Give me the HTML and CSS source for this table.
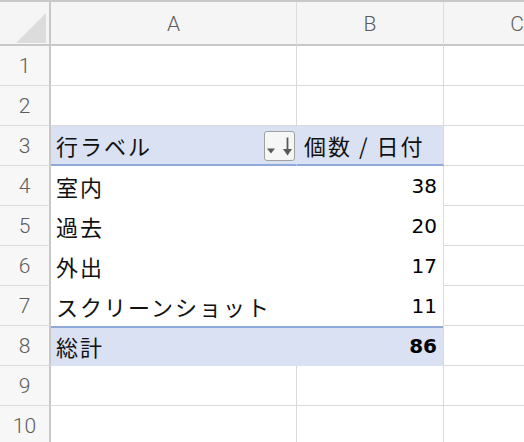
FILE: index.html
```html
<!DOCTYPE html>
<html lang="ja">
<head>
<meta charset="utf-8">
<link rel="stylesheet" href="styles.css">
</head>
<body>
<div class="viewport">
<div class="sheet">
  <div class="corner"><svg width="30" height="30" viewBox="0 0 30 30"><polygon points="30,0 30,30 0,30" fill="#dcdcdc"/></svg></div>
  <div class="hd">A</div>
  <div class="hd">B</div>
  <div class="hd">C</div>

  <div class="rh">1</div><div class="c"></div><div class="c"></div><div class="c"></div>
  <div class="rh">2</div><div class="c"></div><div class="c"></div><div class="c"></div>

  <div class="rh">3</div>
  <div class="c pv pvh pa"><span class="txt">行ラベル</span>
    <span class="filter"><svg width="31" height="30" viewBox="0 0 31 30"><polygon points="3,17.5 11,17.5 7,22.5" fill="#5a5a5a"/><line x1="23.5" y1="6.5" x2="23.5" y2="20" stroke="#5a5a5a" stroke-width="1.8"/><polygon points="19,18 28,18 23.5,24.5" fill="#5a5a5a"/></svg></span>
  </div>
  <div class="c pv pvh pb"><span class="txt">個数 / 日付</span></div>
  <div class="c"></div>

  <div class="rh">4</div><div class="c pv pa"><span class="txt">室内</span></div><div class="c pv pb num">38</div><div class="c"></div>
  <div class="rh">5</div><div class="c pv pa"><span class="txt">過去</span></div><div class="c pv pb num">20</div><div class="c"></div>
  <div class="rh">6</div><div class="c pv pa"><span class="txt">外出</span></div><div class="c pv pb num">17</div><div class="c"></div>
  <div class="rh">7</div><div class="c pv pa"><span class="txt">スクリーンショット</span></div><div class="c pv pb num">11</div><div class="c"></div>

  <div class="rh">8</div><div class="c pv tot pa"><span class="txt">総計</span></div><div class="c pv tot pb num bold">86</div><div class="c"></div>

  <div class="rh">9</div><div class="c"></div><div class="c"></div><div class="c"></div>
  <div class="rh">10</div><div class="c"></div><div class="c"></div><div class="c"></div>
</div>
</div>
</body>
</html>
```
FILE: styles.css
```css
html, body {
  margin: 0;
  padding: 0;
  background: #ffffff;
}

.viewport {
  width: 524px;
  height: 442px;
  overflow: hidden;
}

.sheet {
  display: grid;
  grid-template-columns: 51px 246px 147px 147px;
  grid-template-rows: 44px repeat(10, 40px);
  border-top: 2px solid #c8c8c8;
  width: 591px;
}

.sheet > div {
  box-sizing: border-box;
}

.corner {
  background: #f5f5f5;
  border-right: 2px solid #c8c8c8;
  border-bottom: 2px solid #c8c8c8;
  display: flex;
  justify-content: flex-end;
  align-items: flex-end;
  padding: 0 3px 1px 0;
}

.corner svg {
  display: block;
}

.hd {
  background: #f5f5f5;
  border-bottom: 2px solid #c8c8c8;
  border-right: 1px solid #dcdcdc;
  display: flex;
  align-items: center;
  justify-content: center;
  font-family: Roboto, "Liberation Sans", sans-serif;
  font-weight: 300;
  font-size: 21px;
  color: #5c5c5c;
  padding-top: 2px;
}

.rh {
  background: #f7f7f7;
  border-right: 2px solid #c8c8c8;
  border-bottom: 1px solid #dcdcdc;
  display: flex;
  align-items: center;
  justify-content: center;
  font-family: Roboto, "Liberation Sans", sans-serif;
  font-weight: 300;
  font-size: 21px;
  color: #5c5c5c;
}

.c {
  border-right: 1px solid #d9d9d9;
  border-bottom: 1px solid #d9d9d9;
  display: flex;
  align-items: center;
  font-family: "Noto Sans CJK JP", sans-serif;
  font-size: 22px;
  color: #111111;
}

.pv {
  border-bottom-color: transparent;
}

.pa {
  border-right-color: transparent;
  padding-left: 5px;
}

.pb {
  padding-left: 7px;
  padding-right: 6px;
}

.txt {
  letter-spacing: 2px;
  white-space: nowrap;
}

.pvh {
  background: #d9e1f2;
  border-bottom: 2px solid #8eaadb;
}

.pvh.pa {
  justify-content: space-between;
  padding-right: 1px;
  border-right-color: #d9e1f2;
}

.tot {
  background: linear-gradient(#8eaadb, #8eaadb) top left / 100% 2px no-repeat, #d9e1f2;
  background-origin: border-box;
}

.num {
  justify-content: flex-end;
  font-family: "DejaVu Sans", sans-serif;
  font-size: 20px;
  color: #000000;
}

.bold {
  font-weight: bold;
}

.filter {
  display: block;
  width: 31px;
  height: 30px;
  box-sizing: border-box;
  border: 1px solid #a0a0a0;
  border-radius: 3px;
  background: #f6f6f6;
  margin-top: 1px;
}

.filter svg {
  display: block;
  margin: -1px;
}
```
